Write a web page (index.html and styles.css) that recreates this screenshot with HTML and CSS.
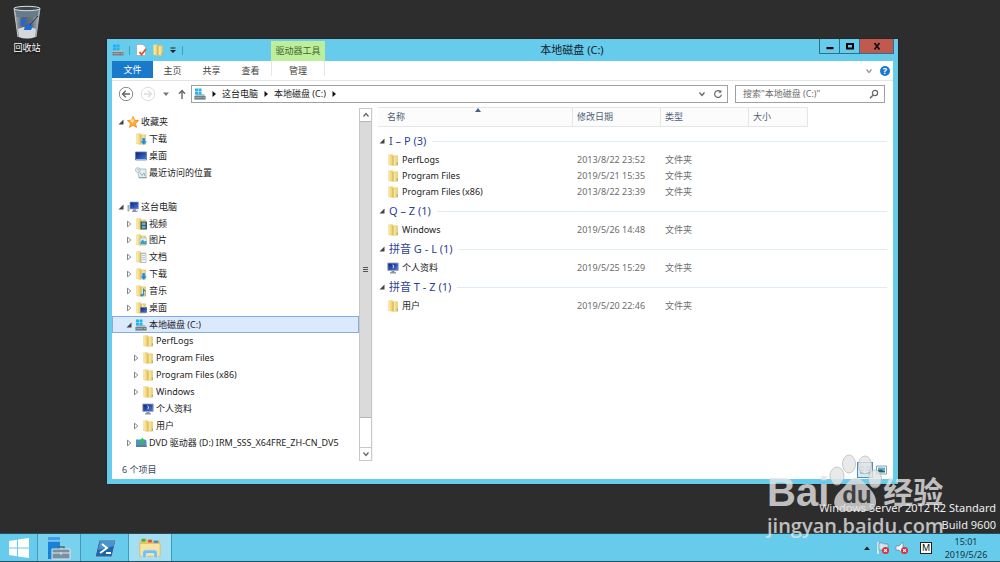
FILE: index.html
```html
<!DOCTYPE html>
<html lang="zh-CN">
<head>
<meta charset="utf-8">
<title>本地磁盘 (C:)</title>
<link rel="stylesheet" href="styles.css">
</head>
<body>
<svg class="defs" aria-hidden="true">
  <defs>
    <linearGradient id="gold" x1="0" x2="1"><stop offset="0" stop-color="#fdf0b4"/><stop offset="1" stop-color="#eccb62"/></linearGradient>
    <linearGradient id="screen" x1="0" y1="0" x2="1" y2="1"><stop offset="0" stop-color="#0a1c80"/><stop offset="1" stop-color="#4a7fe0"/></linearGradient>
    <linearGradient id="glass" x1="0" x2="1"><stop offset="0" stop-color="#a9b2b8"/><stop offset=".35" stop-color="#56616a"/><stop offset=".7" stop-color="#6a747c"/><stop offset="1" stop-color="#b5bdc2"/></linearGradient>
    <symbol id="folder" viewBox="0 0 12 12"><path d="M1.500.8L5.500.5v11l-4-.8z" fill="url(#gold)" stroke="#e5c873" stroke-width=".4"/><path d="M5.500 1.500l1.500.5v9l-1.500.5z" fill="#d9ac3c"/><path d="M6.500 1.800h4v9.500h-4z" fill="url(#gold)" stroke="#e0bf60" stroke-width=".5"/><path d="M9.800 8.500h1v2.200h-1z" fill="#6faeb5"/></symbol>
    <symbol id="drive" viewBox="0 0 12 12"><path d="M.5 8l1.500-2h7.500l2 2v3.500H.5z" fill="#b4bfc5"/><path d="M.5 8h11v3.500H.5z" fill="#6f8089"/><path d="M1.500 9.300h6v.8h-6z" fill="#a9b8be"/><path d="M9 9h1.500v1H9z" fill="#7ee05c"/><path d="M1 .5h3v2.700H1zM4.500.5h3v2.700h-3zM1 3.700h3v2.800H1zM4.500 3.700h3v2.800h-3z" fill="#1fb5ee"/></symbol>
    <symbol id="down" viewBox="0 0 12 12"><use href="#folder"/><path d="M7.200 5h3v3.200H12L8.700 12 5.400 8.200h1.800z" fill="#1f8bd8" stroke="#b6ddf5" stroke-width=".4"/></symbol>
    <symbol id="video" viewBox="0 0 12 12"><use href="#folder"/><path d="M5.500 3.500H12v8H5.500z" fill="#45565e"/><path d="M7 4.500h3.500v2.500H7zM7 8h3.500v2.500H7z" fill="#58b6d4"/></symbol>
    <symbol id="pictures" viewBox="0 0 12 12"><use href="#folder"/><path d="M5 4h7v6.500H5z" fill="#e4f1f7" stroke="#8aa7b5" stroke-width=".5"/><path d="M5.500 8l2-2.500 2 2 2-1v3.500h-6z" fill="#3d9ec4"/></symbol>
    <symbol id="docs" viewBox="0 0 12 12"><use href="#folder"/><path d="M6 2.500h5v9H6z" fill="#eef3f6" stroke="#8797a0" stroke-width=".5"/><path d="M7 4.500h3M7 6.500h3M7 8.500h3" stroke="#8ab0c8" stroke-width=".6"/></symbol>
    <symbol id="music" viewBox="0 0 12 12"><use href="#folder"/><path d="M8 2.500c.5 2 3.500 2.500 3 5.500-.5-1.500-1.500-2-2-2v3.500c0 2.500-4 2.500-3.500.5.200-1 1.500-1.200 2.500-1z" fill="#218ecc"/></symbol>
    <symbol id="deskfolder" viewBox="0 0 12 12"><use href="#folder"/><path d="M5.500 5.500H12v5H5.500z" fill="url(#screen)" stroke="#597da8" stroke-width=".5"/></symbol>
    <symbol id="desk" viewBox="0 0 12 12"><path d="M.5 2h11v8H.5z" fill="url(#screen)" stroke="#637b98" stroke-width=".8"/><path d="M1 9h10v.8H1z" fill="#a9cdec"/></symbol>
    <symbol id="recent" viewBox="0 0 12 12"><path d="M2.500 2h8.500v9H4z" fill="#e7edef" stroke="#8b999e" stroke-width=".6"/><circle cx="2.800" cy="3" r="2.300" fill="#f2f5f6" stroke="#8b9ba5" stroke-width=".6"/><path d="M2.800 1.800V3h1M5 5.500l2 3 2-2.500 1 3M4 10.500h8" fill="none" stroke="#6c9cac" stroke-width=".7"/></symbol>
    <symbol id="star" viewBox="0 0 12 12"><path d="M6 .5l1.600 3.700 4 .4-3 2.700.9 4.100L6 9.300l-3.500 2.100.9-4.100-3-2.700 4-.4z" fill="#ffae2d" stroke="#ea7b16" stroke-width=".7"/><path d="M6 2l1 3-1 2-3-2z" fill="#ffe08a"/></symbol>
    <symbol id="pc" viewBox="0 0 12 12"><path d="M.5 4h2v6.500h-2z" fill="#a7b2b8"/><path d="M.8 5h.8v1H.8z" fill="#51c956"/><path d="M3 1h8.500v7H3z" fill="url(#screen)" stroke="#9ba9b6" stroke-width=".7"/><path d="M6 8.300h3v1.500h1.500v1.200H5V9.800h1z" fill="#8b98a3"/></symbol>
    <symbol id="profile" viewBox="0 0 12 12"><path d="M.8 1h10.400v7.500H.8z" fill="url(#screen)" stroke="#a0a6b2" stroke-width=".9"/><path d="M5 2.500a2 2 0 1 1 0 4 2.500 2.500 0 0 0 0-4" fill="#dbe5fa"/><path d="M4.500 9h3v1.200H9v1.200H3v-1.200h1.500z" fill="#89919a"/></symbol>
    <symbol id="dvd" viewBox="0 0 12 12"><path d="M1 2.500h9l1.500 1V10H1z" fill="#4b93c8"/><path d="M1 8h10.500v2H1z" fill="#607c8e"/><path d="M4 4l4-3.500v2l1-.5v3L6 7.500V6z" fill="#35bd5c"/></symbol>
    <symbol id="open" viewBox="0 0 8 8"><path d="M6.500 1.500v5h-5z" fill="#444"/></symbol>
    <symbol id="closed" viewBox="0 0 8 8"><path d="M2.500 1.200L5.800 4 2.500 6.800z" fill="#fff" stroke="#777" stroke-width=".9"/></symbol>
    <symbol id="right" viewBox="0 0 8 8"><path d="M2.500 1v6L6 4z" fill="#111"/></symbol>
    <symbol id="chev" viewBox="0 0 8 8"><path d="M1.500 2.500L4 5.500l2.500-3" fill="none" stroke="currentColor" stroke-width="1.300"/></symbol>
    <symbol id="no" viewBox="0 0 8 8"><circle cx="4" cy="4" r="4" fill="#d9303a"/><path d="M2.400 2.400l3.200 3.200M5.600 2.400L2.400 5.600" stroke="#fff" stroke-width="1.200"/></symbol>
  </defs>
</svg>

<main class="desktop">
  <button class="bin">
    <svg viewBox="0 0 30 34"><path d="M2 3h26l-4 29q-9 3-18 0z" fill="url(#glass)"/><path d="M3 4h24l-1.500 8H4.500z" fill="#667c8b"/><path d="M6 24q9-5 18 0l-1 8q-8 3-16 0z" fill="#d4d8da"/><path d="M9 14l4-1 2 5-3-1-1 4-3-1zM13 20l5-2 3 3-2 4h-7z" fill="#2368cf"/><path d="M2 3l4 29" stroke="#bdc6ca"/><path d="M28 3l-4 29" stroke="#aab2b6"/><path d="M18 20l8-9" stroke="#2f3840"/><ellipse cx="15" cy="3.500" rx="13" ry="2.200" fill="#3e474e" stroke="#d8dde0"/></svg>
    <span>回收站</span>
  </button>

  <section class="window">
    <header class="titlebar">
      <div class="quick">
        <svg class="ic"><use href="#drive"/></svg>
        <i class="sep"></i>
        <button aria-label="属性"><svg class="ic" viewBox="0 0 12 12"><path d="M1.500.5H8L10.500 3v8.500h-9z" fill="#fff" stroke="#9aa4ab" stroke-width=".7"/><path d="M4.500 8L6.500 10.500 11 5" fill="none" stroke="#e0532d" stroke-width="1.800"/></svg></button>
        <button aria-label="新建文件夹"><svg class="ic"><use href="#folder"/></svg></button>
        <button aria-label="自定义"><svg class="small" viewBox="0 0 8 8"><path d="M1.500 1.500h5v1h-5zM1 4h6L4 7z" fill="#222"/></svg></button>
        <i class="sep"></i>
      </div>
      <span class="context">驱动器工具</span>
      <h1>本地磁盘 (C:)</h1>
      <div class="controls">
        <button aria-label="最小化"><svg viewBox="0 0 10 10"><path d="M1.500 6h7v2.200h-7z"/></svg></button>
        <button aria-label="最大化"><svg viewBox="0 0 10 10"><path d="M1 2h8v6.500H1zM3 4v2.500h4V4z" fill-rule="evenodd"/></svg></button>
        <button class="close" aria-label="关闭"><svg viewBox="0 0 10 10"><path d="M2.500 2l5 6.500M7.500 2l-5 6.500" stroke="#111" stroke-width="1.800"/></svg></button>
      </div>
    </header>

    <nav class="tabs">
      <button class="file">文件</button>
      <button>主页</button>
      <button>共享</button>
      <button>查看</button>
      <button class="manage">管理</button>
      <span class="fill"></span>
      <button class="expand" aria-label="展开功能区"><svg class="small"><use href="#chev"/></svg></button>
      <button class="help" aria-label="帮助">?</button>
    </nav>

    <div class="nav">
      <button aria-label="后退"><svg class="round" viewBox="0 0 16 16"><circle cx="8" cy="8" r="6.700" fill="none" stroke="#888"/><path d="M12 8H5M7.800 4.700L4.500 8l3.300 3.300" fill="none" stroke="#666" stroke-width="1.400"/></svg></button>
      <button aria-label="前进"><svg class="round" viewBox="0 0 16 16"><circle cx="8" cy="8" r="6.700" fill="none" stroke="#ddd"/><path d="M4 8h7M8.200 4.700L11.500 8l-3.300 3.300" fill="none" stroke="#ddd" stroke-width="1.400"/></svg></button>
      <button aria-label="最近位置"><svg class="small" viewBox="0 0 8 8"><path d="M1 2.500h6L4 6z" fill="#777"/></svg></button>
      <button class="parent" aria-label="上移"><svg class="small up" viewBox="0 0 8 10"><path d="M4 10V2M1 4.700l3-3.200 3 3.200" fill="none" stroke="#666" stroke-width="1.400"/></svg></button>
      <div class="address">
        <svg class="ic"><use href="#drive"/></svg>
        <svg class="small"><use href="#right"/></svg>
        <button>这台电脑</button>
        <svg class="small"><use href="#right"/></svg>
        <button>本地磁盘 (C:)</button>
        <svg class="small"><use href="#right"/></svg>
        <span class="fill"></span>
        <button class="history" aria-label="历史"><svg class="small"><use href="#chev"/></svg></button>
        <button aria-label="刷新"><svg class="refresh" viewBox="0 0 10 10"><path d="M7.500 2.700A3.400 3.400 0 1 0 8.400 5.500" fill="none" stroke="#666" stroke-width="1.200"/><path d="M8.300.8v3H5.200z" fill="#666"/></svg></button>
      </div>
      <label class="search">
        <input type="text" aria-label="搜索" placeholder="搜索&quot;本地磁盘 (C:)&quot;">
        <svg class="refresh" viewBox="0 0 10 10"><circle cx="6" cy="4" r="2.600" fill="none" stroke="#666" stroke-width="1.200"/><path d="M4.200 6L1 9.200" stroke="#666" stroke-width="1.500"/></svg>
      </label>
    </div>

    <div class="body">
      <aside class="side">
        <ul class="tree">
          <li><svg class="tw"><use href="#open"/></svg><svg class="ic"><use href="#star"/></svg>收藏夹</li>
          <li class="l1"><i class="tw"></i><svg class="ic"><use href="#down"/></svg>下载</li>
          <li class="l1"><i class="tw"></i><svg class="ic"><use href="#desk"/></svg>桌面</li>
          <li class="l1"><i class="tw"></i><svg class="ic"><use href="#recent"/></svg>最近访问的位置</li>
          <li aria-hidden="true"></li>
          <li><svg class="tw"><use href="#open"/></svg><svg class="ic"><use href="#pc"/></svg>这台电脑</li>
          <li class="l1"><svg class="tw"><use href="#closed"/></svg><svg class="ic"><use href="#video"/></svg>视频</li>
          <li class="l1"><svg class="tw"><use href="#closed"/></svg><svg class="ic"><use href="#pictures"/></svg>图片</li>
          <li class="l1"><svg class="tw"><use href="#closed"/></svg><svg class="ic"><use href="#docs"/></svg>文档</li>
          <li class="l1"><svg class="tw"><use href="#closed"/></svg><svg class="ic"><use href="#down"/></svg>下载</li>
          <li class="l1"><svg class="tw"><use href="#closed"/></svg><svg class="ic"><use href="#music"/></svg>音乐</li>
          <li class="l1"><svg class="tw"><use href="#closed"/></svg><svg class="ic"><use href="#deskfolder"/></svg>桌面</li>
          <li class="l1 selected"><svg class="tw"><use href="#open"/></svg><svg class="ic"><use href="#drive"/></svg>本地磁盘 (C:)</li>
          <li class="l2"><i class="tw"></i><svg class="ic"><use href="#folder"/></svg>PerfLogs</li>
          <li class="l2"><svg class="tw"><use href="#closed"/></svg><svg class="ic"><use href="#folder"/></svg>Program Files</li>
          <li class="l2"><svg class="tw"><use href="#closed"/></svg><svg class="ic"><use href="#folder"/></svg>Program Files (x86)</li>
          <li class="l2"><svg class="tw"><use href="#closed"/></svg><svg class="ic"><use href="#folder"/></svg>Windows</li>
          <li class="l2"><i class="tw"></i><svg class="ic"><use href="#profile"/></svg>个人资料</li>
          <li class="l2"><svg class="tw"><use href="#closed"/></svg><svg class="ic"><use href="#folder"/></svg>用户</li>
          <li class="l1"><svg class="tw"><use href="#closed"/></svg><svg class="ic"><use href="#dvd"/></svg>DVD 驱动器 (D:) IRM_SSS_X64FRE_ZH-CN_DV5</li>
        </ul>
        <div class="scroll">
          <button aria-label="向上滚动"><svg class="small flip"><use href="#chev"/></svg></button>
          <div class="thumb"><i></i><i></i><i></i></div>
          <div class="track"></div>
          <button aria-label="向下滚动"><svg class="small"><use href="#chev"/></svg></button>
        </div>
      </aside>

      <div class="files">
        <table>
          <colgroup><col class="c-name"><col class="c-date"><col class="c-type"><col class="c-size"><col></colgroup>
          <thead><tr><th class="name">名称<svg class="sort" viewBox="0 0 6 4"><path d="M3 0l3 4H0z" fill="#44618a"/></svg></th><th>修改日期</th><th>类型</th><th>大小</th><td></td></tr></thead>
          <tbody>
            <tr class="group first"><th colspan="5"><div><svg class="tw"><use href="#open"/></svg>I – P (3)</div></th></tr>
            <tr><td class="name"><div><svg class="ic"><use href="#folder"/></svg>PerfLogs</div></td><td>2013/8/22 23:52</td><td>文件夹</td><td></td><td></td></tr>
            <tr><td class="name"><div><svg class="ic"><use href="#folder"/></svg>Program Files</div></td><td>2019/5/21 15:35</td><td>文件夹</td><td></td><td></td></tr>
            <tr><td class="name"><div><svg class="ic"><use href="#folder"/></svg>Program Files (x86)</div></td><td>2013/8/22 23:39</td><td>文件夹</td><td></td><td></td></tr>
          </tbody>
          <tbody>
            <tr class="group"><th colspan="5"><div><svg class="tw"><use href="#open"/></svg>Q – Z (1)</div></th></tr>
            <tr><td class="name"><div><svg class="ic"><use href="#folder"/></svg>Windows</div></td><td>2019/5/26 14:48</td><td>文件夹</td><td></td><td></td></tr>
          </tbody>
          <tbody>
            <tr class="group"><th colspan="5"><div><svg class="tw"><use href="#open"/></svg>拼音 G - L (1)</div></th></tr>
            <tr><td class="name"><div><svg class="ic"><use href="#profile"/></svg>个人资料</div></td><td>2019/5/25 15:29</td><td>文件夹</td><td></td><td></td></tr>
          </tbody>
          <tbody>
            <tr class="group"><th colspan="5"><div><svg class="tw"><use href="#open"/></svg>拼音 T - Z (1)</div></th></tr>
            <tr><td class="name"><div><svg class="ic"><use href="#folder"/></svg>用户</div></td><td>2019/5/20 22:46</td><td>文件夹</td><td></td><td></td></tr>
          </tbody>
        </table>
      </div>
    </div>

    <footer class="status">
      <span>6 个项目</span>
      <span class="fill"></span>
      <button class="view on" aria-label="详细信息"><svg viewBox="0 0 14 14"><path d="M2 4h4M2 7h4M2 10h4M8 4h4M8 7h4M8 10h4" stroke="#7894ab"/></svg></button>
      <button class="view" aria-label="大图标"><svg viewBox="0 0 14 14"><path d="M2.500 3h10v8h-10z" fill="#fff" stroke="#8c9da8"/><path d="M4 4.500h7v3H4z" fill="#58aee0"/><path d="M4 7l3-.5 4 1.500v1.500H4z" fill="#236b60"/></svg></button>
    </footer>
  </section>

  <p class="build">Windows Server 2012 R2 Standard<br>Build 9600</p>

  <div class="watermark">
    <div class="brand">
      <span>Bai</span>
      <span class="paw">
        <svg viewBox="0 0 54 58"><g fill="#e4e4e4" stroke="#bbb"><ellipse cx="8" cy="23" rx="7" ry="9"/><ellipse cx="20" cy="11" rx="6.500" ry="9"/><ellipse cx="36" cy="12" rx="6.500" ry="9"/><ellipse cx="46" cy="26" rx="6.500" ry="9"/></g><path d="M27 25c6 0 9 6 14 11 9 9 8 22-3 22H15C3 58 2 45 12 37c6-5 8-12 15-12z" fill="#ddd"/></svg>
        <b>du</b>
      </span>
      <span class="cn">经验</span>
    </div>
    <div class="site">jingyan.baidu.com</div>
  </div>
</main>

<footer class="taskbar">
  <button class="start" aria-label="开始"><svg viewBox="0 0 20 20"><path d="M0 3l8-1.200v7.700H0zM9 1.600L20 0v9.500H9zM0 10.500h8v7.700L0 17zM9 10.500h11V20L9 18.400z" fill="#fff"/></svg></button>
  <button class="task" aria-label="服务器管理器"><svg viewBox="0 0 24 24"><path d="M1 1h12v22H1z" fill="#1683d8"/><path d="M1 1h12v4H1z" fill="#3ca1ea"/><path d="M1 5h12" stroke="#bce3fa"/><path d="M11 13v-2h6v2" fill="none" stroke="#50697a" stroke-width="1.500"/><path d="M5 13h18v10H5z" fill="#7890a0" stroke="#d9eaf2"/><path d="M5 17h18M14 16v3" stroke="#dce9ef"/></svg></button>
  <button class="task ps" aria-label="PowerShell"><svg viewBox="0 0 24 24"><path d="M6 4h17l-4 17H2z" fill="#1f66a8" stroke="#8cc5e8"/><path d="M7 5h15l-1 5-16 4z" fill="#4a94cc"/><path d="M9 8l5 4-7 5M13 17h5" fill="none" stroke="#fff" stroke-width="2"/></svg></button>
  <button class="task active" aria-label="文件资源管理器"><svg viewBox="0 0 26 24"><path d="M2 3l7-1 2 2h12l1 3v14H2z" fill="#e5c465"/><path d="M4 2h4v3H4z" fill="#3eac54"/><path d="M11 3h4v3h-4z" fill="#d85041"/><path d="M17 4h5v3h-5z" fill="#448bd3"/><path d="M2 7h22v14H2z" fill="#f8e6a0" stroke="#ddbd66"/><path d="M5 23v-6q0-3 3-3h10q3 0 3 3v6h-4v-5H9v5z" fill="#79bfe4" stroke="#c7e9f8"/></svg></button>
  <span class="fill"></span>
  <div class="tray">
    <button aria-label="显示隐藏的图标"><svg class="small" viewBox="0 0 8 8"><path d="M4 2.500L7 6H1z" fill="#222"/></svg></button>
    <button aria-label="网络"><svg viewBox="0 0 14 14"><path d="M2 1v12" stroke="#eee" stroke-width="1.600"/><path d="M3 2h4l1 1h4v6H3z" fill="#cfe5ee" stroke="#607d8b" stroke-width=".6"/><use href="#no" x="6" y="6" width="7" height="7"/></svg></button>
    <button aria-label="音量"><svg viewBox="0 0 14 14"><path d="M1 5h3l4-4v12L4 9H1z" fill="#f2f7f9" stroke="#607d8b" stroke-width=".6"/><use href="#no" x="6" y="6" width="7" height="7"/></svg></button>
    <button class="ime">M</button>
  </div>
  <time class="clock">15:01<br>2019/5/26</time>
</footer>
</body>
</html>
```

FILE: styles.css
```css
* { box-sizing: border-box; }
body {
  margin: 0;
  height: 100vh;
  display: flex;
  flex-direction: column;
  background: #2d2d2d;
  color: #222;
  font: 9px/12px "Noto Sans", "Noto Sans CJK SC", sans-serif;
  overflow: hidden;
}
button {
  margin: 0;
  padding: 0;
  border: 0;
  background: none;
  font: inherit;
  color: inherit;
  display: flex;
  align-items: center;
  justify-content: center;
}
svg { display: block; flex: none; }
.defs { position: absolute; width: 0; height: 0; }
.ic { width: 12px; height: 12px; }
.small { width: 8px; height: 8px; color: #666; }
.tw { width: 8px; height: 8px; flex: none; }
.fill { flex: 1; }

.desktop { flex: 1; position: relative; min-height: 0; }
.bin {
  position: absolute;
  left: 7px;
  top: 5px;
  width: 40px;
  flex-direction: column;
  gap: 3px;
  color: #fff;
  text-shadow: 0 1px 2px #000;
}
.bin svg { width: 30px; height: 34px; }

.window {
  position: absolute;
  inset: 39px 102px 49px 107px;
  display: flex;
  flex-direction: column;
  padding: 0 5px 5px;
  background: #67cbeb;
  box-shadow: 0 0 1px #111;
}
.titlebar { display: flex; height: 22px; flex: none; align-items: flex-start; }
.quick { width: 159px; height: 22px; display: flex; align-items: center; gap: 5px; }
.sep { width: 1px; height: 9px; background: #4a9ab8; }
.context {
  width: 54px;
  height: 20px;
  margin-top: 2px;
  background: #bdee9c;
  color: #45652f;
  text-align: center;
  line-height: 20px;
}
h1 { flex: 1; margin: 0; text-align: center; font-size: 11px; font-weight: 400; line-height: 22px; color: #10222b; }
.controls { display: flex; height: 15px; border: 1px solid #2f6f88; border-top: 0; margin-right: -1px; }
.controls button { width: 20px; border-right: 1px solid #2f6f88; }
.controls .close { width: 33px; border: 0; background: #c2594f; }
.controls svg { width: 10px; height: 10px; }

.tabs { display: flex; height: 20px; flex: none; background: #fff; border-bottom: 1px solid #e3e4e6; color: #444; }
.tabs button { width: 39px; }
.tabs .file { width: 41px; height: 17px; background: #1979ca; color: #fff; }
.tabs .manage { width: 54px; height: 15px; padding-top: 4px; margin-left: 1px; border: solid #e6e6e6; border-width: 0 1px; }
.tabs .expand { width: 16px; }
.tabs .expand svg { color: #999; }
.tabs .help {
  width: 10px;
  height: 10px;
  margin: 5px 3px 0 3px;
  border-radius: 50%;
  background: #1979ca;
  color: #fff;
  font-weight: 700;
}

.nav { display: flex; height: 26px; flex: none; align-items: center; gap: 6px; padding: 0 8px 0 6px; background: #fff; }
.round { width: 16px; height: 16px; }
.nav .up { height: 10px; }
.parent { margin-left: 2px; }
.address, .search { display: flex; align-items: center; height: 18px; border: 1px solid #a0a0a0; background: #fff; }
.address { flex: 1; gap: 4px; padding: 0 4px 0 2px; margin-left: -1px; color: #222; }
.refresh { width: 10px; height: 10px; }
.history { margin-right: 3px; }
.search { width: 150px; padding: 0 5px 0 7px; margin-left: 1px; }
.search input { flex: 1; min-width: 0; padding: 0; border: 0; outline: 0; background: none; font: inherit; }
.search input::placeholder { color: #6d6d6d; opacity: 1; }

.body { flex: 1; min-height: 0; display: grid; grid-template-columns: 260px 1fr; background: #fff; }
.side { display: flex; padding-top: 1px; min-height: 0; }
.tree {
  flex: 1;
  min-width: 0;
  margin: 0;
  padding: 6px 0 10px;
  list-style: none;
  display: grid;
  grid-template-rows: repeat(20, 1fr);
}
.tree li { display: flex; align-items: center; gap: 2px; padding-left: 4px; white-space: nowrap; min-height: 0; border: 1px solid transparent; }
.tree .l1 { padding-left: 12px; }
.tree .l2 { padding-left: 19px; }
.tree .selected { background: #dbe9fd; border-color: #84acdd; }
.scroll { width: 13px; display: flex; flex-direction: column; border: 1px solid #c8c8c8; }
.scroll button { height: 12px; }
.thumb { flex: 10; display: flex; flex-direction: column; align-items: center; justify-content: center; gap: 1px; background: #dadada; border: solid #b5b5b5; border-width: 1px 0; }
.thumb i { width: 5px; height: 1px; background: #555; }
.track { flex: 1; border-bottom: 1px solid #c8c8c8; }
.flip { transform: rotate(180deg); }

.files { padding: 0 6px 0 5px; overflow: hidden; border-left: 1px solid #f5f5f5; }
table { width: 100%; table-layout: fixed; border-spacing: 0; color: #6d6d6d; }
.c-name { width: 195px; }
.c-date, .c-type { width: 88px; }
.c-size { width: 59px; }
th, td { padding: 0 4px; text-align: left; font-weight: 400; white-space: nowrap; height: 16px; }
thead th { height: 20px; background: #fcfcfc; border: solid #e4e6e8; border-width: 1px 1px 1px 0; color: #4c607a; position: relative; }
th.name, td.name { padding-left: 9px; }
td.name { color: #222; }
td.name div { display: flex; align-items: center; gap: 3px; }
.sort { position: absolute; left: 97px; top: 0; width: 6px; height: 4px; }
.group th { height: 22px; padding: 0; color: #2b3f97; font-size: 11px; line-height: 16px; }
.group.first th { height: 25px; padding-top: 3px; }
.group div { display: flex; align-items: center; gap: 3px; }
.group div::after { content: ""; flex: 1; height: 1px; margin-left: 3px; background: #dfebf5; }

.status { display: flex; height: 18px; flex: none; align-items: center; padding: 0 4px 0 10px; background: #fff; color: #3a4a60; }
.view { width: 16px; height: 16px; }
.view svg { width: 14px; height: 14px; }
.view.on { background: #d5eaf8; border: 1px solid #4a90bd; }

.build {
  position: absolute;
  right: 4px;
  bottom: 0;
  margin: 0;
  color: #eee;
  text-align: right;
  font-size: 11px;
  line-height: 17px;
}
.watermark { position: absolute; right: 55px; bottom: -8px; width: 178px; color: #e4e4e4; opacity: .8; pointer-events: none; }
.brand { display: flex; align-items: flex-end; height: 58px; font: 700 40px/38px "Liberation Sans", "Noto Sans CJK SC", sans-serif; }
.paw { position: relative; width: 54px; height: 58px; }
.paw svg { width: 54px; height: 58px; }
.paw b { position: absolute; left: 13px; bottom: 2px; color: #444; font-size: 24px; line-height: 28px; }
.brand .cn { font-size: 30px; line-height: 36px; white-space: nowrap; }
.site { font: 600 20px/30px "Open Sans", sans-serif; white-space: nowrap; }

.taskbar { display: flex; flex: none; height: 29px; background: #67cbeb; border: solid #24505f; border-width: 1px 0; }
.start { width: 38px; border-right: 1px solid #3d9ab8; }
.start svg { width: 20px; height: 20px; }
.task { width: 43px; background: #79d1ed; border-right: 1px solid #3d9ab8; }
.task svg { width: 24px; height: 24px; }
.task.ps { width: 48px; background: none; }
.task.active { background: #a4def2; }
.tray { display: flex; align-items: center; gap: 5px; }
.tray button > svg:not(.small) { width: 14px; height: 14px; }
.tray .ime { width: 12px; height: 12px; margin-left: 6px; background: #fff; border: 1px solid #222; color: #111; }
.clock { width: 68px; display: flex; align-items: center; justify-content: center; text-align: center; line-height: 13px; color: #173540; }
```
